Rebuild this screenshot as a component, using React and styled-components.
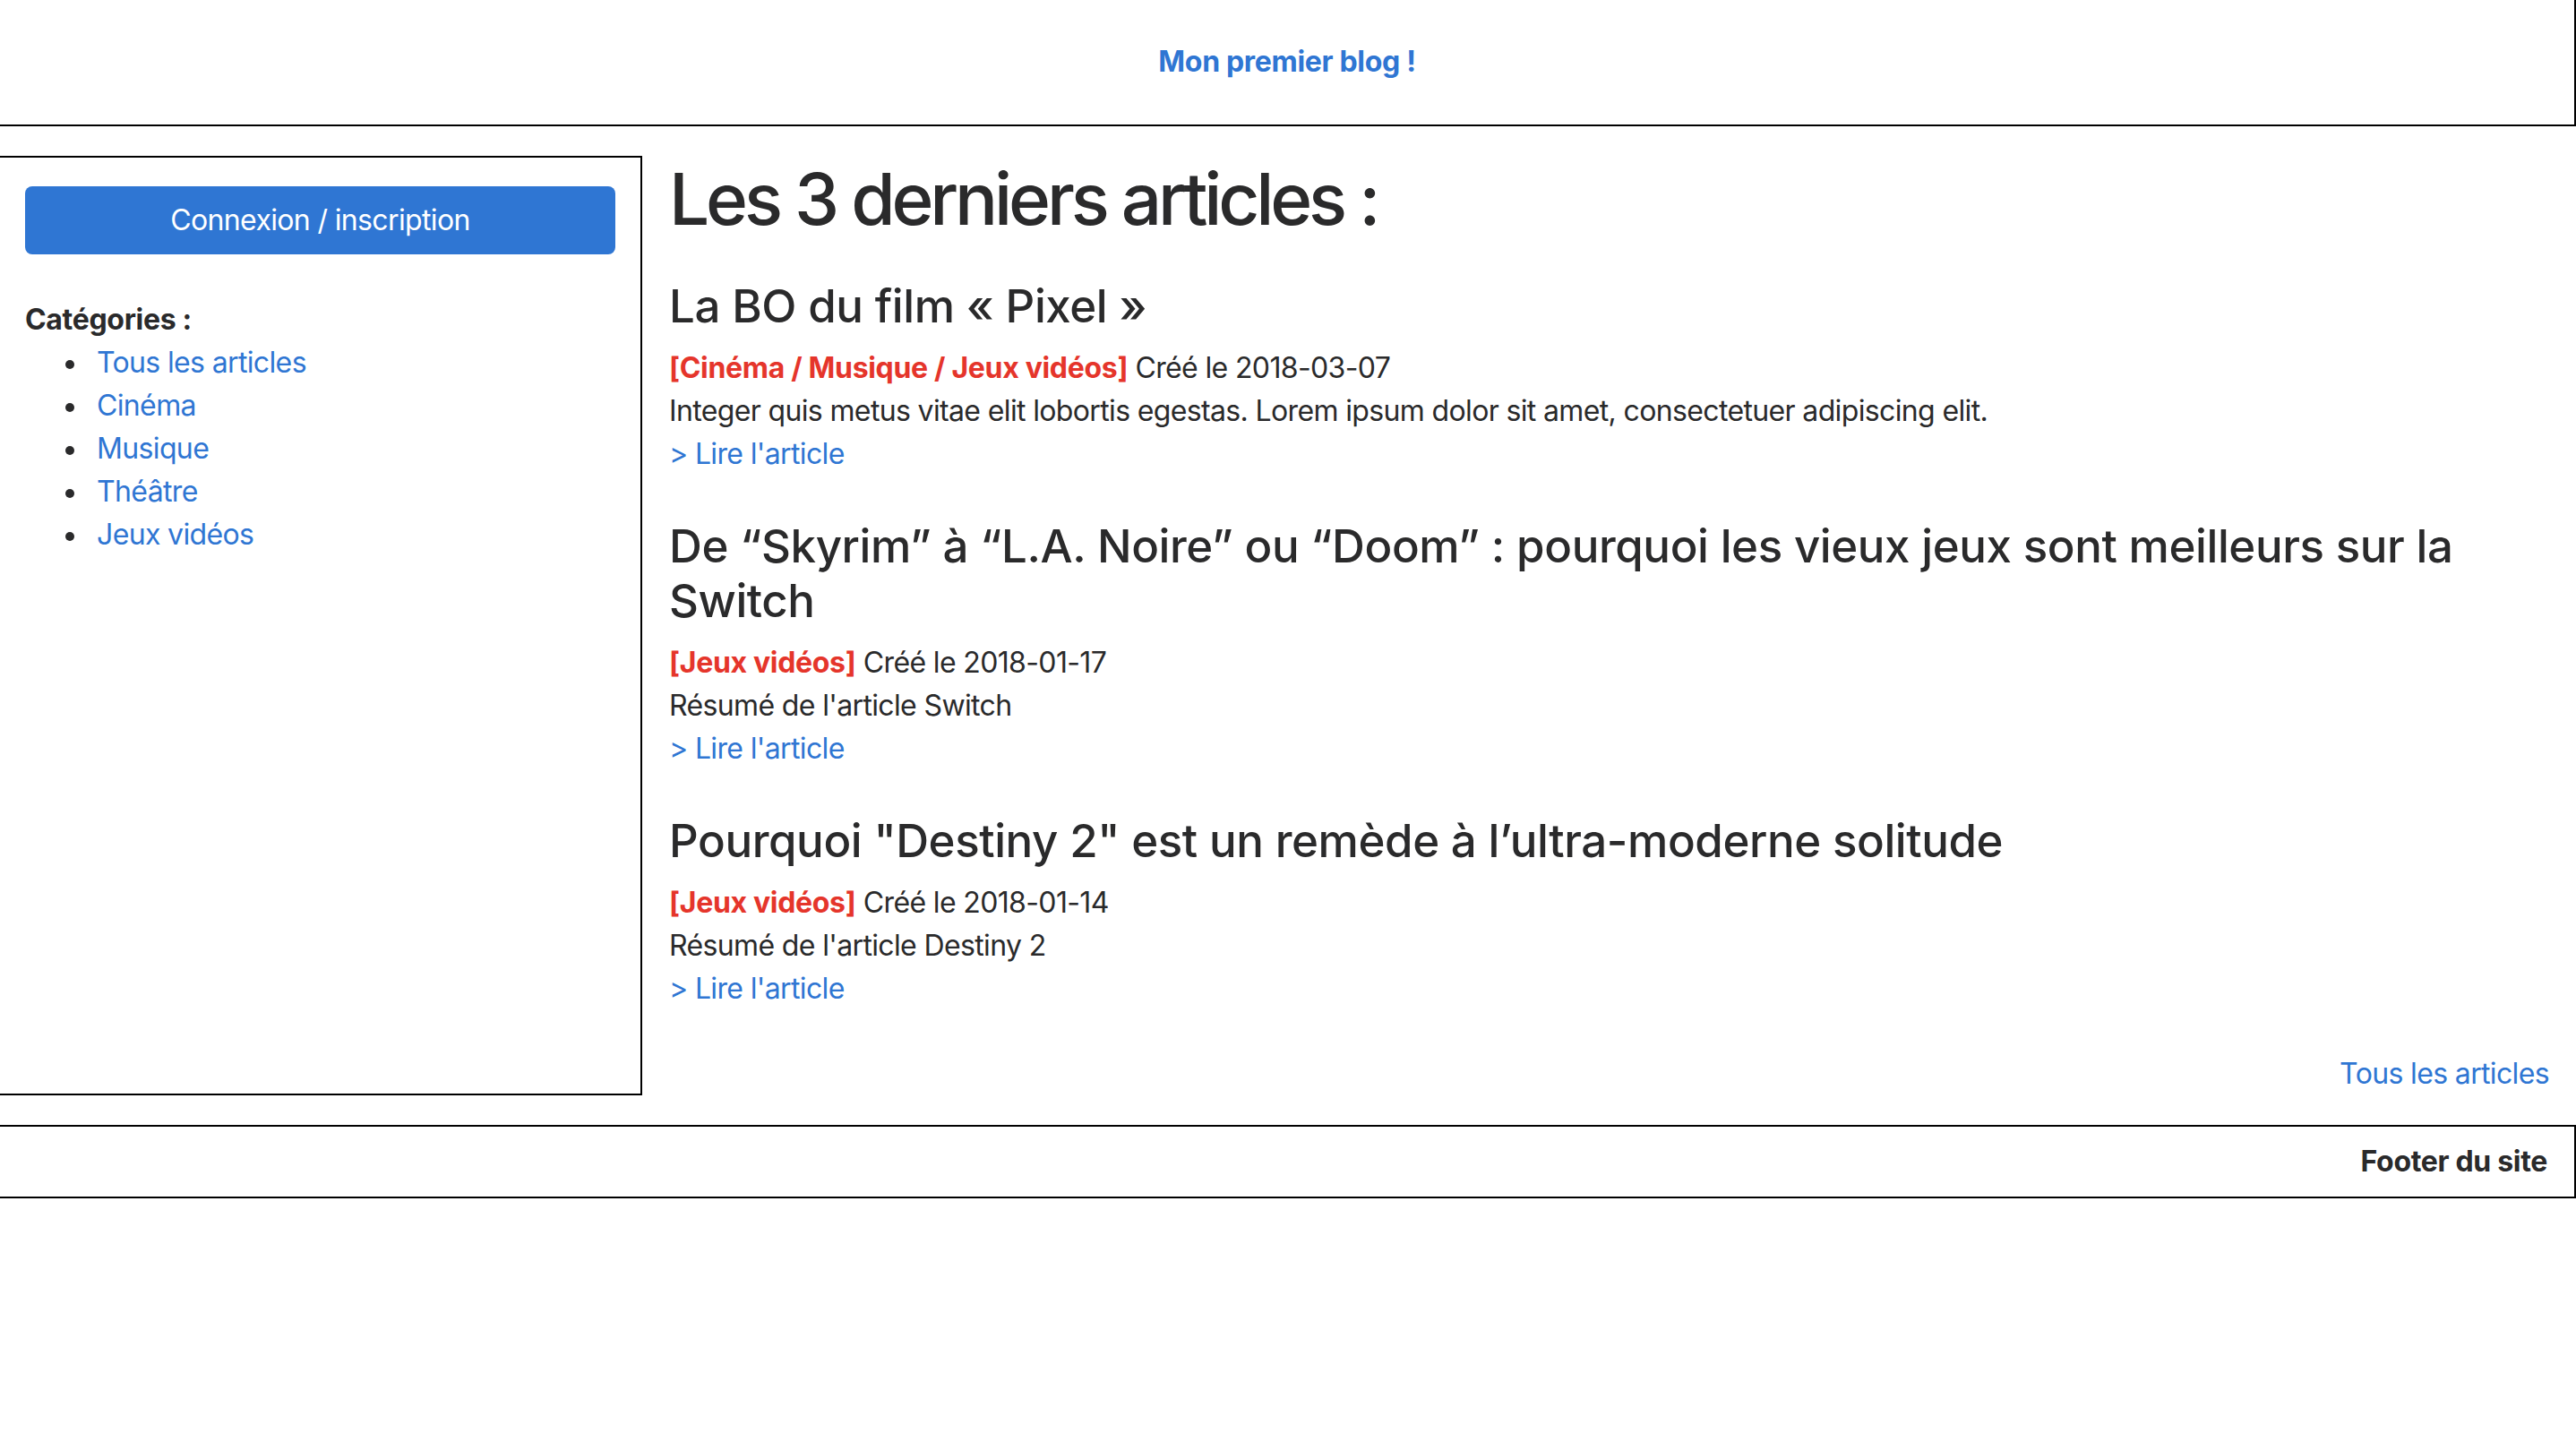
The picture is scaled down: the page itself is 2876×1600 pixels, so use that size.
import React from 'react'
import styled, { createGlobalStyle } from 'styled-components'

const GlobalStyle = createGlobalStyle`
  html, body {
    margin: 0;
    padding: 0;
    background: #fff;
  }
  body {
    font-family: Inter, 'Noto Sans', 'Liberation Sans', sans-serif;
    font-size: 32px;
    line-height: 48px;
    letter-spacing: -0.02em;
    color: #2a2a2b;
  }
  * {
    box-sizing: border-box;
  }
`

const blue = '#2f76d3'
const red = '#e5352b'

const categories = ['Tous les articles', 'Cinéma', 'Musique', 'Théâtre', 'Jeux vidéos']

const articles = [
  {
    title: 'La BO du film « Pixel »',
    tags: 'Cinéma / Musique / Jeux vidéos',
    date: '2018-03-07',
    summary:
      'Integer quis metus vitae elit lobortis egestas. Lorem ipsum dolor sit amet, consectetuer adipiscing elit.',
  },
  {
    title: 'De “Skyrim” à “L.A. Noire” ou “Doom” : pourquoi les vieux jeux sont meilleurs sur la Switch',
    tags: 'Jeux vidéos',
    date: '2018-01-17',
    summary: "Résumé de l'article Switch",
  },
  {
    title: 'Pourquoi "Destiny 2" est un remède à l’ultra-moderne solitude',
    tags: 'Jeux vidéos',
    date: '2018-01-14',
    summary: "Résumé de l'article Destiny 2",
  },
]

export default function App() {
  return (
    <>
      <GlobalStyle />
      <Header>
        <Brand href='#'>Mon premier blog !</Brand>
      </Header>
      <Row>
        <Sidebar>
          <LoginButton type='button'>Connexion / inscription</LoginButton>
          <CatTitle>Catégories :</CatTitle>
          <CatList>
            {categories.map(c => (
              <CatItem key={c}>
                <Link href='#'>{c}</Link>
              </CatItem>
            ))}
          </CatList>
        </Sidebar>
        <Main>
          <Title>Les 3 derniers articles :</Title>
          {articles.map(a => (
            <Article key={a.title}>
              <ArticleTitle>{a.title}</ArticleTitle>
              <Line>
                <Tags>[{a.tags}]</Tags> Créé le {a.date}
              </Line>
              <Line>{a.summary}</Line>
              <Line>
                <Link href='#'>&gt; Lire l'article</Link>
              </Line>
            </Article>
          ))}
          <AllLink>
            <Link href='#'>Tous les articles</Link>
          </AllLink>
        </Main>
      </Row>
      <Footer>Footer du site</Footer>
    </>
  )
}

const Link = styled.a`
  color: ${blue};
  text-decoration: none;
`

const Header = styled.header`
  height: 141px;
  display: flex;
  align-items: center;
  justify-content: center;
  border-right: 2px solid #000;
  border-bottom: 2px solid #000;
  padding-bottom: 2px;
`

const Brand = styled.a`
  color: ${blue};
  font-weight: 700;
  letter-spacing: -0.01em;
  text-decoration: none;
`

const Row = styled.div`
  display: flex;
  align-items: stretch;
  margin-top: 33px;
`

const Sidebar = styled.aside`
  width: 717px;
  flex-shrink: 0;
  padding: 32px 28px;
  border-top: 2px solid #000;
  border-right: 2px solid #000;
  border-bottom: 2px solid #000;
`

const LoginButton = styled.button`
  display: block;
  width: 100%;
  height: 76px;
  border: none;
  border-radius: 8px;
  background: ${blue};
  color: #fff;
  font: inherit;
  letter-spacing: inherit;
  cursor: pointer;
`

const CatTitle = styled.div`
  margin-top: 49px;
  font-weight: 700;
  letter-spacing: -0.01em;
`

const CatList = styled.ul`
  margin: 0;
  padding-left: 80px;
  list-style: none;
`

const CatItem = styled.li`
  position: relative;

  &::before {
    content: '';
    position: absolute;
    left: -35px;
    top: 21px;
    width: 10px;
    height: 10px;
    border-radius: 50%;
    background: #2a2a2b;
  }
`

const Main = styled.main`
  flex: 1;
  padding: 0 30px;
`

const Title = styled.h1`
  margin: 0 0 41px;
  font-size: 80px;
  line-height: 96px;
  font-weight: 500;
  letter-spacing: -0.052em;
`

const Article = styled.article`
  & + & {
    margin-top: 48px;
  }
`

const ArticleTitle = styled.h3`
  margin: 0 0 15px;
  font-size: 51px;
  line-height: 61px;
  font-weight: 500;
  letter-spacing: -0.008em;
`

const Line = styled.p`
  margin: 0;
`

const Tags = styled.span`
  color: ${red};
  font-weight: 700;
  letter-spacing: -0.01em;
`

const AllLink = styled.div`
  margin-top: 47px;
  text-align: right;
`

const Footer = styled.footer`
  margin-top: 33px;
  height: 82px;
  display: flex;
  align-items: center;
  justify-content: flex-end;
  padding: 0 30px;
  border-top: 2px solid #000;
  border-right: 2px solid #000;
  border-bottom: 2px solid #000;
  font-weight: 700;
  letter-spacing: -0.01em;
`
